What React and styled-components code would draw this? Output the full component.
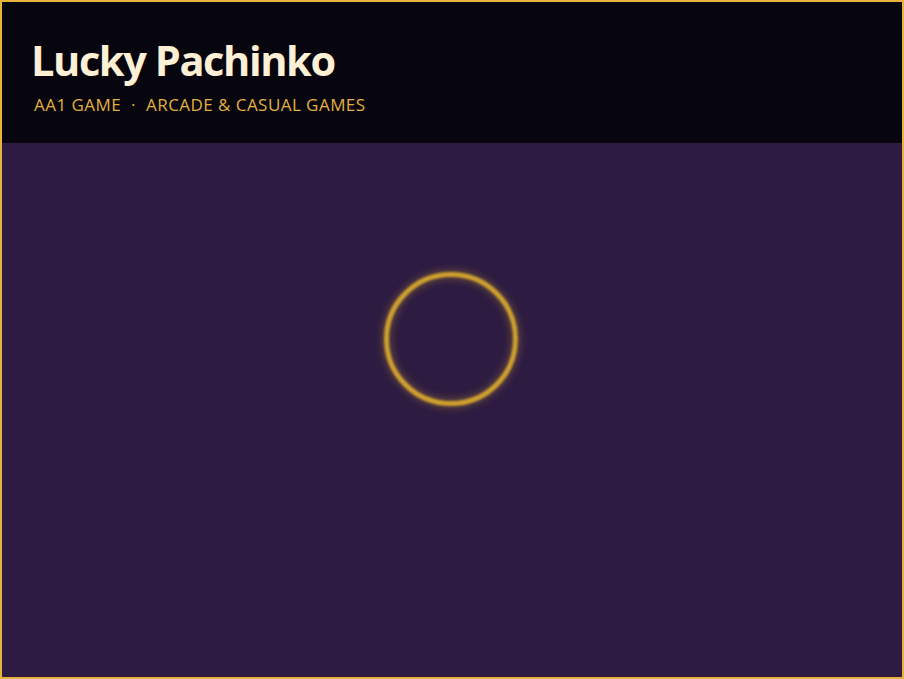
import React from "react";
import styled, { createGlobalStyle } from "styled-components";

const Global = createGlobalStyle`
  html, body { margin: 0; padding: 0; height: 100%; }
  body { background: #2d1b42; font-family: "Open Sans", "Noto Sans", sans-serif; }
  #root { height: 100%; }
  * { box-sizing: border-box; }
`;

const Frame = styled.div`
  height: 100%;
  border: 2px solid #e9b23d;
  display: flex;
  flex-direction: column;
  background: #2d1b42;
`;

const Header = styled.header`
  background: #07060f;
  height: 141px;
  padding: 34px 29px 0;
  display: flex;
  flex-direction: column;
`;

const Title = styled.h1`
  margin: 0;
  font-size: 41.5px;
  line-height: 48px;
  font-weight: 700;
  color: #fdf0d4;
  letter-spacing: -1.4px;
`;

const Sub = styled.div`
  margin-top: 10px;
  font-size: 17px;
  line-height: 22px;
  color: #e2b040;
  letter-spacing: 0.45px;
  text-transform: uppercase;
  padding-left: 3px;
`;

const Dot = styled.span`
  margin: 0 10px;
`;

const Main = styled.main`
  flex: 1;
  display: flex;
  justify-content: center;
  padding-top: 129px;
  padding-right: 2px;
`;

const Ring = styled.div`
  width: 134px;
  height: 134px;
  border-radius: 50%;
  border: 5px solid #cfa02e;
  filter: blur(1px);
  box-shadow: 0 0 9px 1px rgba(216, 168, 48, 0.38), inset 0 0 9px 1px rgba(216, 168, 48, 0.38);
`;

export default function App() {
  return (
    <>
      <Global />
      <Frame>
        <Header>
          <Title>Lucky Pachinko</Title>
          <Sub>
            AA1 Game<Dot>·</Dot>Arcade &amp; Casual Games
          </Sub>
        </Header>
        <Main>
          <Ring />
        </Main>
      </Frame>
    </>
  );
}
